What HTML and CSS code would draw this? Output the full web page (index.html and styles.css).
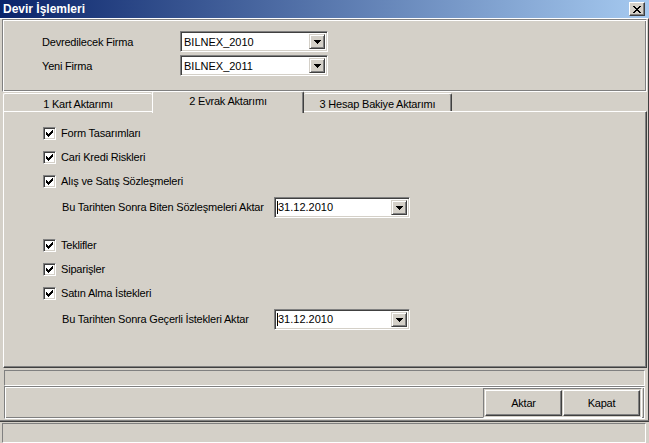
FILE: index.html
```html
<!DOCTYPE html>
<html lang="tr">
<head>
<meta charset="utf-8">
<title>Devir İşlemleri</title>
<link rel="stylesheet" href="styles.css">
</head>
<body>
<div class="window">
  <div class="titlebar">
    <span class="title">Devir İşlemleri</span>
    <div class="close">
      <svg width="8" height="7" viewBox="0 0 8 7" shape-rendering="crispEdges"><path d="M0 0h2v1h1v1h2v-1h1v-1h2v1h-1v1h-1v1h-1v1h1v1h1v1h1v1h-2v-1h-1v-1h-2v1h-1v1h-2v-1h1v-1h1v-1h1v-1h-1v-1h-1v-1h-1z" fill="#000"/></svg>
    </div>
  </div>
  <div class="client">
    <div class="group">
      <div class="field">
        <span class="flabel">Devredilecek Firma</span>
        <div class="combo wide">
          <span class="ctext">BILNEX_2010</span>
          <span class="dropbtn"><svg width="7" height="4" viewBox="0 0 7 4" shape-rendering="crispEdges"><path d="M0 0h7v1h-1v1h-1v1h-1v1h-1v-1h-1v-1h-1v-1h-1z" fill="#000"/></svg></span>
        </div>
      </div>
      <div class="field">
        <span class="flabel">Yeni Firma</span>
        <div class="combo wide">
          <span class="ctext">BILNEX_2011</span>
          <span class="dropbtn"><svg width="7" height="4" viewBox="0 0 7 4" shape-rendering="crispEdges"><path d="M0 0h7v1h-1v1h-1v1h-1v1h-1v-1h-1v-1h-1v-1h-1z" fill="#000"/></svg></span>
        </div>
      </div>
    </div>

    <div class="tabs">
      <div class="tab t1">1 Kart Aktarımı</div>
      <div class="tab t2 active">2 Evrak Aktarımı</div>
      <div class="tab t3">3 Hesap Bakiye Aktarımı</div>
    </div>

    <div class="tabpanel">
      <div class="chkrow"><span class="chk"><svg width="13" height="13" viewBox="0 0 13 13" shape-rendering="crispEdges"><g fill="#000"><rect x="9" y="3" width="1" height="1"/><rect x="8" y="4" width="2" height="1"/><rect x="3" y="5" width="1" height="1"/><rect x="7" y="5" width="3" height="1"/><rect x="3" y="6" width="2" height="1"/><rect x="6" y="6" width="3" height="1"/><rect x="3" y="7" width="5" height="1"/><rect x="4" y="8" width="3" height="1"/><rect x="5" y="9" width="1" height="1"/></g></svg></span><span>Form Tasarımları</span></div>
      <div class="chkrow"><span class="chk"><svg width="13" height="13" viewBox="0 0 13 13" shape-rendering="crispEdges"><g fill="#000"><rect x="9" y="3" width="1" height="1"/><rect x="8" y="4" width="2" height="1"/><rect x="3" y="5" width="1" height="1"/><rect x="7" y="5" width="3" height="1"/><rect x="3" y="6" width="2" height="1"/><rect x="6" y="6" width="3" height="1"/><rect x="3" y="7" width="5" height="1"/><rect x="4" y="8" width="3" height="1"/><rect x="5" y="9" width="1" height="1"/></g></svg></span><span>Cari Kredi Riskleri</span></div>
      <div class="chkrow"><span class="chk"><svg width="13" height="13" viewBox="0 0 13 13" shape-rendering="crispEdges"><g fill="#000"><rect x="9" y="3" width="1" height="1"/><rect x="8" y="4" width="2" height="1"/><rect x="3" y="5" width="1" height="1"/><rect x="7" y="5" width="3" height="1"/><rect x="3" y="6" width="2" height="1"/><rect x="6" y="6" width="3" height="1"/><rect x="3" y="7" width="5" height="1"/><rect x="4" y="8" width="3" height="1"/><rect x="5" y="9" width="1" height="1"/></g></svg></span><span>Alış ve Satış Sözleşmeleri</span></div>
      <div class="daterow">
        <span class="dlabel">Bu Tarihten Sonra Biten Sözleşmeleri Aktar</span>
        <div class="combo date">
          <span class="ctext"><span class="caret"></span>31.12.2010</span>
          <span class="dropbtn"><svg width="7" height="4" viewBox="0 0 7 4" shape-rendering="crispEdges"><path d="M0 0h7v1h-1v1h-1v1h-1v1h-1v-1h-1v-1h-1v-1h-1z" fill="#000"/></svg></span>
        </div>
      </div>

      <div class="chkrow gap"><span class="chk"><svg width="13" height="13" viewBox="0 0 13 13" shape-rendering="crispEdges"><g fill="#000"><rect x="9" y="3" width="1" height="1"/><rect x="8" y="4" width="2" height="1"/><rect x="3" y="5" width="1" height="1"/><rect x="7" y="5" width="3" height="1"/><rect x="3" y="6" width="2" height="1"/><rect x="6" y="6" width="3" height="1"/><rect x="3" y="7" width="5" height="1"/><rect x="4" y="8" width="3" height="1"/><rect x="5" y="9" width="1" height="1"/></g></svg></span><span>Teklifler</span></div>
      <div class="chkrow"><span class="chk"><svg width="13" height="13" viewBox="0 0 13 13" shape-rendering="crispEdges"><g fill="#000"><rect x="9" y="3" width="1" height="1"/><rect x="8" y="4" width="2" height="1"/><rect x="3" y="5" width="1" height="1"/><rect x="7" y="5" width="3" height="1"/><rect x="3" y="6" width="2" height="1"/><rect x="6" y="6" width="3" height="1"/><rect x="3" y="7" width="5" height="1"/><rect x="4" y="8" width="3" height="1"/><rect x="5" y="9" width="1" height="1"/></g></svg></span><span>Siparişler</span></div>
      <div class="chkrow"><span class="chk"><svg width="13" height="13" viewBox="0 0 13 13" shape-rendering="crispEdges"><g fill="#000"><rect x="9" y="3" width="1" height="1"/><rect x="8" y="4" width="2" height="1"/><rect x="3" y="5" width="1" height="1"/><rect x="7" y="5" width="3" height="1"/><rect x="3" y="6" width="2" height="1"/><rect x="6" y="6" width="3" height="1"/><rect x="3" y="7" width="5" height="1"/><rect x="4" y="8" width="3" height="1"/><rect x="5" y="9" width="1" height="1"/></g></svg></span><span>Satın Alma İstekleri</span></div>
      <div class="daterow">
        <span class="dlabel">Bu Tarihten Sonra Geçerli İstekleri Aktar</span>
        <div class="combo date">
          <span class="ctext"><span class="caret"></span>31.12.2010</span>
          <span class="dropbtn"><svg width="7" height="4" viewBox="0 0 7 4" shape-rendering="crispEdges"><path d="M0 0h7v1h-1v1h-1v1h-1v1h-1v-1h-1v-1h-1v-1h-1z" fill="#000"/></svg></span>
        </div>
      </div>
    </div>

    <div class="bar"></div>
    <div class="btnbar">
      <div class="btngroup">
        <button class="btn">Aktar</button>
        <button class="btn">Kapat</button>
      </div>
    </div>
  </div>
  <div class="statusbar"></div>
</div>
</body>
</html>
```

FILE: styles.css
```css
html, body {
  margin: 0;
  padding: 0;
  background: #d4d0c8;
}

.window {
  width: 649px;
  height: 443px;
  display: flex;
  flex-direction: column;
  background: #d4d0c8;
  font-family: "Liberation Sans", Arial, sans-serif;
  font-size: 11px;
  letter-spacing: -0.2px;
  color: #000;
  overflow: hidden;
}

/* title bar */
.titlebar {
  height: 18px;
  flex: none;
  display: flex;
  align-items: center;
  justify-content: space-between;
  padding: 0 4px 0 3px;
  background: linear-gradient(to right, #0a246a 0%, #a6caf0 100%);
}
.title {
  color: #fff;
  font-weight: bold;
  font-size: 12px;
  letter-spacing: 0;
  line-height: 18px;
}
.close {
  width: 14px;
  height: 12px;
  display: flex;
  align-items: center;
  justify-content: center;
  background: #d4d0c8;
  border: 1px solid;
  border-color: #fff #404040 #404040 #fff;
  box-shadow: inset -1px -1px #808080;
}

/* client area */
.client {
  flex: none;
  display: flex;
  flex-direction: column;
  border-top: 1px solid #fff;
  border-bottom: 1px solid #808080;
  border-right: 1px solid #404040;
  box-shadow: 0 1px #404040;
  box-sizing: border-box;
  height: 403px;
}

/* etched group with the two firms */
.group {
  margin-left: 2px;
  width: 645px;
  height: 73px;
  box-sizing: border-box;
  border: 1px solid;
  border-color: #808080 #fff #fff #808080;
  box-shadow: inset 1px 1px #fff, inset -1px -1px #808080;
  padding: 11px 0 0 39px;
  display: flex;
  flex-direction: column;
  gap: 3px;
}
.field {
  display: flex;
  align-items: center;
  height: 21px;
}
.flabel {
  width: 138px;
}

/* combo boxes */
.combo {
  height: 21px;
  box-sizing: border-box;
  background: #fff;
  border: 1px solid;
  border-color: #808080 #fff #fff #808080;
  box-shadow: inset 1px 1px #404040, inset -1px -1px #d4d0c8;
  padding: 2px;
  display: flex;
  align-items: stretch;
  letter-spacing: 0;
}
.combo.wide { width: 148px; }
.combo.date { width: 136px; }
.ctext {
  flex: 1;
  display: flex;
  align-items: center;
  padding-left: 1px;
  white-space: nowrap;
}
.combo.date .ctext { padding-left: 0; }
.caret {
  width: 1px;
  height: 13px;
  background: #000;
}
.dropbtn {
  width: 16px;
  box-sizing: border-box;
  background: #d4d0c8;
  border: 1px solid;
  border-color: #d4d0c8 #404040 #404040 #d4d0c8;
  box-shadow: inset 1px 1px #fff, inset -1px -1px #808080;
  display: flex;
  align-items: center;
  justify-content: center;
  padding-top: 1px;
}

/* tabs */
.tabs {
  height: 19px;
  flex: none;
  margin-left: 3px;
  display: flex;
  align-items: flex-end;
}
.tab {
  height: 18px;
  box-sizing: border-box;
  border: 1px solid;
  border-bottom: none;
  border-color: #fff #404040 transparent #fff;
  box-shadow: inset -1px 0 #808080;
  border-radius: 2px 2px 0 0;
  display: flex;
  align-items: center;
  justify-content: center;
  padding-top: 2px;
  white-space: nowrap;
}
.t1 { width: 149px; border-right: none; box-shadow: none; }
.t2 { width: 152px; }
.t3 { width: 148px; border-left: none; }
.tab.active {
  height: 22px;
  margin-bottom: -2px;
  position: relative;
  z-index: 1;
  background: #d4d0c8;
  padding-top: 0;
  padding-bottom: 4px;
}

/* tab page */
.tabpanel {
  margin-left: 3px;
  width: 644px;
  height: 257px;
  flex: none;
  box-sizing: border-box;
  border: 1px solid;
  border-color: #fff #404040 #404040 #fff;
  box-shadow: inset -1px -1px #808080;
  padding: 9px 0 0 39px;
  display: flex;
  flex-direction: column;
}
.chkrow {
  height: 24px;
  display: flex;
  align-items: center;
  gap: 5px;
}
.chkrow.gap { margin-top: 12px; }
.chk {
  width: 13px;
  height: 13px;
  box-sizing: border-box;
  background: #fff;
  border: 1px solid;
  border-color: #808080 #fff #fff #808080;
  box-shadow: inset 1px 1px #404040, inset -1px -1px #d4d0c8;
  position: relative;
  display: block;
}
.chk svg {
  position: absolute;
  left: -1px;
  top: -1px;
}
.daterow {
  height: 28px;
  display: flex;
  align-items: center;
  padding-left: 19px;
}
.dlabel {
  width: 212px;
  white-space: nowrap;
}

/* bottom bars */
.bar {
  margin: 2px 0 0 4px;
  width: 641px;
  height: 16px;
  flex: none;
  box-sizing: border-box;
  border: 1px solid;
  border-color: #808080 #fff #fff #808080;
}
.btnbar {
  margin-left: 4px;
  width: 641px;
  height: 33px;
  flex: none;
  box-sizing: border-box;
  border: 1px solid;
  border-color: #808080 #fff #fff #808080;
  box-shadow: inset 1px 1px #fff, inset -1px -1px #808080;
  padding: 1px 2px 1px 0;
  display: flex;
  justify-content: flex-end;
}
.btngroup {
  height: 30px;
  box-sizing: border-box;
  border: 1px solid;
  border-color: #808080 #fff #fff #808080;
  padding: 1px;
  display: flex;
  gap: 1px;
}
.btn {
  width: 77px;
  height: 26px;
  margin: 0;
  padding: 0;
  box-sizing: border-box;
  background: #d4d0c8;
  font-family: "Liberation Sans", Arial, sans-serif;
  font-size: 11px;
  letter-spacing: -0.2px;
  color: #000;
  border: 1px solid;
  border-color: #fff #404040 #404040 #fff;
  box-shadow: inset -1px -1px #808080, inset 1px 1px #d4d0c8;
}

.statusbar {
  margin: 2px 0 0 2px;
  width: 644px;
  height: 20px;
  flex: none;
  box-sizing: border-box;
  border: 1px solid;
  border-color: #808080 #fff #fff #808080;
}
```
